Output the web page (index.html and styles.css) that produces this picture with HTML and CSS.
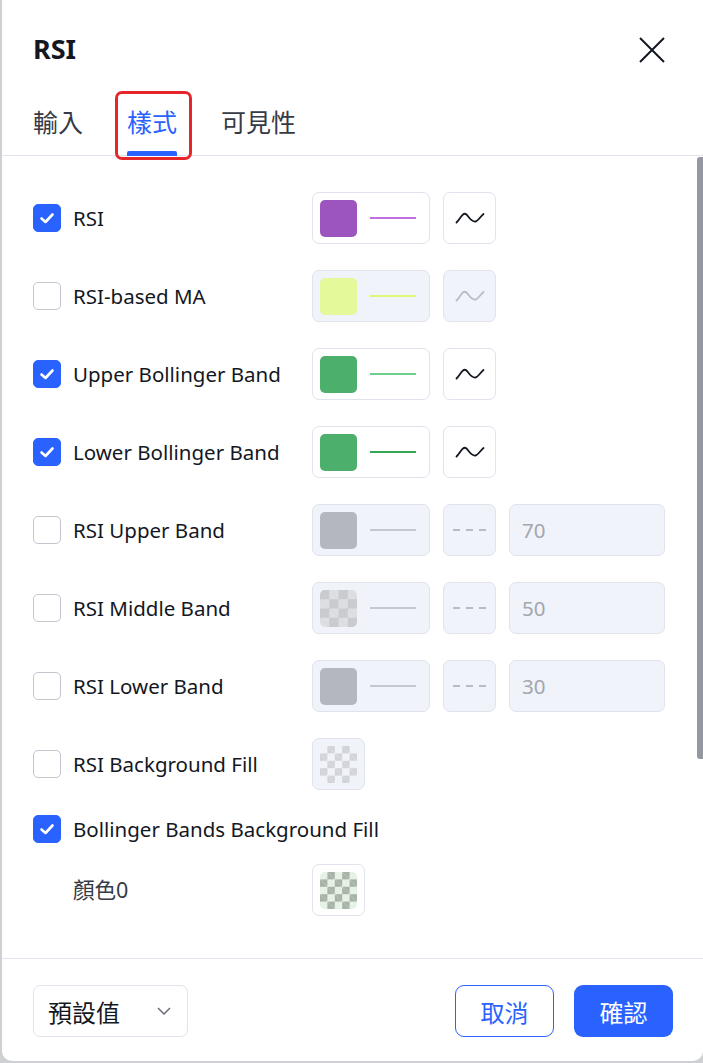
FILE: index.html
```html
<!DOCTYPE html>
<html lang="zh-Hant">
<head>
<meta charset="utf-8">
<title>RSI</title>
<link rel="stylesheet" href="styles.css">
</head>
<body>
<div class="dialog">
  <div class="header">
    <h1 class="title">RSI</h1>
    <button class="close" aria-label="close">
      <svg width="26" height="26" viewBox="0 0 26 26"><path d="M1 1 L25 25 M25 1 L1 25" stroke="#131722" stroke-width="2" fill="none"/></svg>
    </button>
  </div>
  <div class="tabs">
    <div class="tab">輸入</div>
    <div class="tab active">樣式<span class="mark"></span></div>
    <div class="tab">可見性</div>
    <span class="highlight"></span>
  </div>
  <div class="content">
    <div class="rows">
      <div class="row">
        <label class="check"><span class="box on"><svg viewBox="0 0 28 28" width="28" height="28"><path d="M8.5 14.5 L12.5 18 L19.5 10.5" stroke="#fff" stroke-width="2.6" fill="none" stroke-linecap="round" stroke-linejoin="round"/></svg></span>RSI</label>
        <div class="swatch"><span class="chip purple"></span><span class="line line-purple"></span></div>
        <div class="btn-sq"><svg width="30" height="14" viewBox="0 0 30 14"><path d="M1.5 11.5 C4 9 6 5 8 3.5 C10.5 1.5 12 4 14 6.5 C16.5 9.5 18 11 20.5 10.5 C23 10 25.5 5.5 28.5 3" stroke="#131722" stroke-width="1.8" fill="none" stroke-linecap="round"/></svg></div>
      </div>
      <div class="row">
        <label class="check"><span class="box"></span>RSI-based MA</label>
        <div class="swatch off"><span class="chip yellow"></span><span class="line line-yellow"></span></div>
        <div class="btn-sq off"><svg width="30" height="14" viewBox="0 0 30 14"><path d="M1.5 11.5 C4 9 6 5 8 3.5 C10.5 1.5 12 4 14 6.5 C16.5 9.5 18 11 20.5 10.5 C23 10 25.5 5.5 28.5 3" stroke="#b8bbc4" stroke-width="1.8" fill="none" stroke-linecap="round"/></svg></div>
      </div>
      <div class="row">
        <label class="check"><span class="box on"><svg viewBox="0 0 28 28" width="28" height="28"><path d="M8.5 14.5 L12.5 18 L19.5 10.5" stroke="#fff" stroke-width="2.6" fill="none" stroke-linecap="round" stroke-linejoin="round"/></svg></span>Upper Bollinger Band</label>
        <div class="swatch"><span class="chip green"></span><span class="line line-green-light"></span></div>
        <div class="btn-sq"><svg width="30" height="14" viewBox="0 0 30 14"><path d="M1.5 11.5 C4 9 6 5 8 3.5 C10.5 1.5 12 4 14 6.5 C16.5 9.5 18 11 20.5 10.5 C23 10 25.5 5.5 28.5 3" stroke="#131722" stroke-width="1.8" fill="none" stroke-linecap="round"/></svg></div>
      </div>
      <div class="row">
        <label class="check"><span class="box on"><svg viewBox="0 0 28 28" width="28" height="28"><path d="M8.5 14.5 L12.5 18 L19.5 10.5" stroke="#fff" stroke-width="2.6" fill="none" stroke-linecap="round" stroke-linejoin="round"/></svg></span>Lower Bollinger Band</label>
        <div class="swatch"><span class="chip green"></span><span class="line line-green"></span></div>
        <div class="btn-sq"><svg width="30" height="14" viewBox="0 0 30 14"><path d="M1.5 11.5 C4 9 6 5 8 3.5 C10.5 1.5 12 4 14 6.5 C16.5 9.5 18 11 20.5 10.5 C23 10 25.5 5.5 28.5 3" stroke="#131722" stroke-width="1.8" fill="none" stroke-linecap="round"/></svg></div>
      </div>
      <div class="row">
        <label class="check"><span class="box"></span>RSI Upper Band</label>
        <div class="swatch off"><span class="chip grey"></span><span class="line line-grey"></span></div>
        <div class="btn-sq off"><span class="dash"></span></div>
        <div class="num off">70</div>
      </div>
      <div class="row">
        <label class="check"><span class="box"></span>RSI Middle Band</label>
        <div class="swatch off"><span class="chip checker"></span><span class="line line-grey"></span></div>
        <div class="btn-sq off"><span class="dash"></span></div>
        <div class="num off">50</div>
      </div>
      <div class="row">
        <label class="check"><span class="box"></span>RSI Lower Band</label>
        <div class="swatch off"><span class="chip grey"></span><span class="line line-grey"></span></div>
        <div class="btn-sq off"><span class="dash"></span></div>
        <div class="num off">30</div>
      </div>
      <div class="row">
        <label class="check"><span class="box"></span>RSI Background Fill</label>
        <div class="btn-sq off"><span class="chip checker small"></span></div>
      </div>
      <div class="row row-short">
        <label class="check wide"><span class="box on"><svg viewBox="0 0 28 28" width="28" height="28"><path d="M8.5 14.5 L12.5 18 L19.5 10.5" stroke="#fff" stroke-width="2.6" fill="none" stroke-linecap="round" stroke-linejoin="round"/></svg></span>Bollinger Bands Background Fill</label>
      </div>
      <div class="row row-sub">
        <label class="check sub">顏色0</label>
        <div class="btn-sq"><span class="chip checker green-checker small"></span></div>
      </div>
    </div>
    <div class="scrollbar"></div>
  </div>
  <div class="footer">
    <div class="select">預設值
      <svg width="14" height="8" viewBox="0 0 14 8"><path d="M1 1 L7 7 L13 1" stroke="#6a6d78" stroke-width="1.5" fill="none"/></svg>
    </div>
    <div class="actions">
      <button class="btn cancel">取消</button>
      <button class="btn ok">確認</button>
    </div>
  </div>
</div>
</body>
</html>
```

FILE: styles.css
```css
* { box-sizing: border-box; }
html, body { margin: 0; padding: 0; }
body {
  width: 703px;
  height: 1063px;
  background: #cfd0d3;
  font-family: "Noto Sans", "Noto Sans CJK TC", sans-serif;
  color: #131722;
  overflow: hidden;
}
.dialog {
  margin-left: 2px;
  width: 701px;
  height: 1061px;
  background: #fff;
  border-radius: 0 0 10px 10px;
  display: flex;
  flex-direction: column;
}
.header {
  height: 99px;
  padding: 0 38px 0 31px;
  display: flex;
  align-items: center;
  justify-content: space-between;
}
.title {
  margin: 0;
  font-size: 27px;
  font-weight: 700;
  line-height: 30px;
  margin-top: -1px;
}
.close {
  background: none;
  border: 0;
  padding: 0;
  width: 26px;
  height: 26px;
  display: flex;
}
.tabs {
  position: relative;
  height: 57px;
  border-bottom: 1px solid #e0e3eb;
  display: flex;
  gap: 44px;
  padding-left: 31px;
}
.tab {
  position: relative;
  font-size: 25px;
  line-height: 34px;
  padding-top: 6px;
  color: #363a45;
}
.tab.active { color: #2962ff; }
.tab .mark {
  position: absolute;
  left: 0;
  right: 0;
  bottom: -1px;
  height: 5px;
  background: #2962ff;
  border-radius: 2px 2px 0 0;
}
.highlight {
  position: absolute;
  left: 113px;
  top: -8px;
  width: 77px;
  height: 69px;
  border: 3px solid #e7262b;
  border-radius: 7px;
}
.content {
  flex: 1;
  position: relative;
  overflow: hidden;
}
.rows {
  padding: 36px 0 0 31px;
  display: flex;
  flex-direction: column;
  gap: 26px;
}
.row {
  display: grid;
  grid-template-columns: 266px auto auto auto;
  column-gap: 13px;
  align-items: center;
  height: 52px;
  justify-content: start;
}
.row-short { height: 28px; margin-top: -1px; }
.row-sub { margin-top: -5px; }
.check {
  display: flex;
  align-items: center;
  gap: 12px;
  font-size: 20.5px;
  line-height: 28px;
  white-space: nowrap;
}
.check.wide { grid-column: 1 / span 4; }
.check.sub { padding-left: 40px; color: #363a45; font-size: 21.5px; }
.box {
  width: 28px;
  height: 28px;
  border: 1.5px solid #c3c6ce;
  border-radius: 5px;
  background: #fff;
  flex: none;
  display: flex;
}
.box.on {
  background: #2962ff;
  border-color: #2962ff;
}
.box.on svg { margin: -1.5px; }
.swatch {
  width: 118px;
  height: 52px;
  border: 1.5px solid #e0e3eb;
  border-radius: 7px;
  background: #fff;
  display: flex;
  align-items: center;
  padding-left: 7px;
  gap: 13px;
}
.off { background: #f0f3fa; }
.chip {
  width: 37px;
  height: 37px;
  border-radius: 5px;
  flex: none;
}
.chip.purple { background: #9c55bf; }
.chip.yellow { background: #e4f99a; }
.chip.green { background: #4caf6b; }
.chip.grey { background: #b4b7bf; }
.chip.checker {
  background-color: #c9cbd1;
  background-image:
    linear-gradient(45deg, #dedfe3 25%, transparent 25%, transparent 75%, #dedfe3 75%),
    linear-gradient(45deg, #dedfe3 25%, transparent 25%, transparent 75%, #dedfe3 75%);
  background-size: 18.5px 18.5px;
  background-position: 0 0, 9.25px 9.25px;
}
.btn-sq .chip.checker {
  background-color: #f0f3fa;
  background-image:
    linear-gradient(45deg, #d2d4da 25%, transparent 25%, transparent 75%, #d2d4da 75%),
    linear-gradient(45deg, #d2d4da 25%, transparent 25%, transparent 75%, #d2d4da 75%);
  background-size: 14.8px 14.8px;
  background-position: 0 0, 7.4px 7.4px;
}
.btn-sq .chip.green-checker {
  background-color: #e6f2e6;
  background-image:
    linear-gradient(45deg, #a6b3a6 25%, transparent 25%, transparent 75%, #a6b3a6 75%),
    linear-gradient(45deg, #a6b3a6 25%, transparent 25%, transparent 75%, #a6b3a6 75%);
}
.line {
  width: 46px;
  height: 1.5px;
  flex: none;
}
.line-purple { background: #c06ee0; }
.line-yellow { background: #dff776; height: 2px; }
.line-green-light { background: #6fcf8c; }
.line-green { background: #34a853; height: 2px; }
.line-grey { background: #c5c8cf; }
.btn-sq {
  width: 53px;
  height: 52px;
  border: 1.5px solid #e0e3eb;
  border-radius: 7px;
  display: flex;
  align-items: center;
  justify-content: center;
}
.btn-sq:not(.off) { background: #fff; }
.dash {
  width: 34px;
  height: 1.5px;
  background: repeating-linear-gradient(90deg, #b8bbc4 0 7px, transparent 7px 13px);
}
.num {
  width: 156px;
  height: 52px;
  border: 1.5px solid #e0e3eb;
  border-radius: 7px;
  display: flex;
  align-items: center;
  padding-left: 12px;
  font-size: 20.5px;
  color: #a3a6af;
}
.scrollbar {
  position: absolute;
  right: 0;
  top: 1px;
  width: 6px;
  height: 602px;
  background: #9598a1;
  border-radius: 3px 0 0 3px;
}
.footer {
  height: 103px;
  border-top: 1.5px solid #e0e3eb;
  padding: 26px 30px 0 31px;
  display: flex;
  justify-content: space-between;
  align-items: flex-start;
}
.select {
  width: 155px;
  height: 52px;
  border: 1.5px solid #e0e3eb;
  border-radius: 7px;
  display: flex;
  align-items: center;
  justify-content: space-between;
  padding: 0 16px 0 14px;
  font-size: 24px;
  color: #131722;
}
.actions { display: flex; gap: 20px; }
.btn {
  width: 99px;
  height: 52px;
  border-radius: 9px;
  font-family: inherit;
  font-size: 24px;
  padding: 0;
}
.cancel {
  background: #fff;
  border: 1.5px solid #2962ff;
  color: #2962ff;
}
.ok {
  background: #2962ff;
  border: 0;
  color: #fff;
}
```
